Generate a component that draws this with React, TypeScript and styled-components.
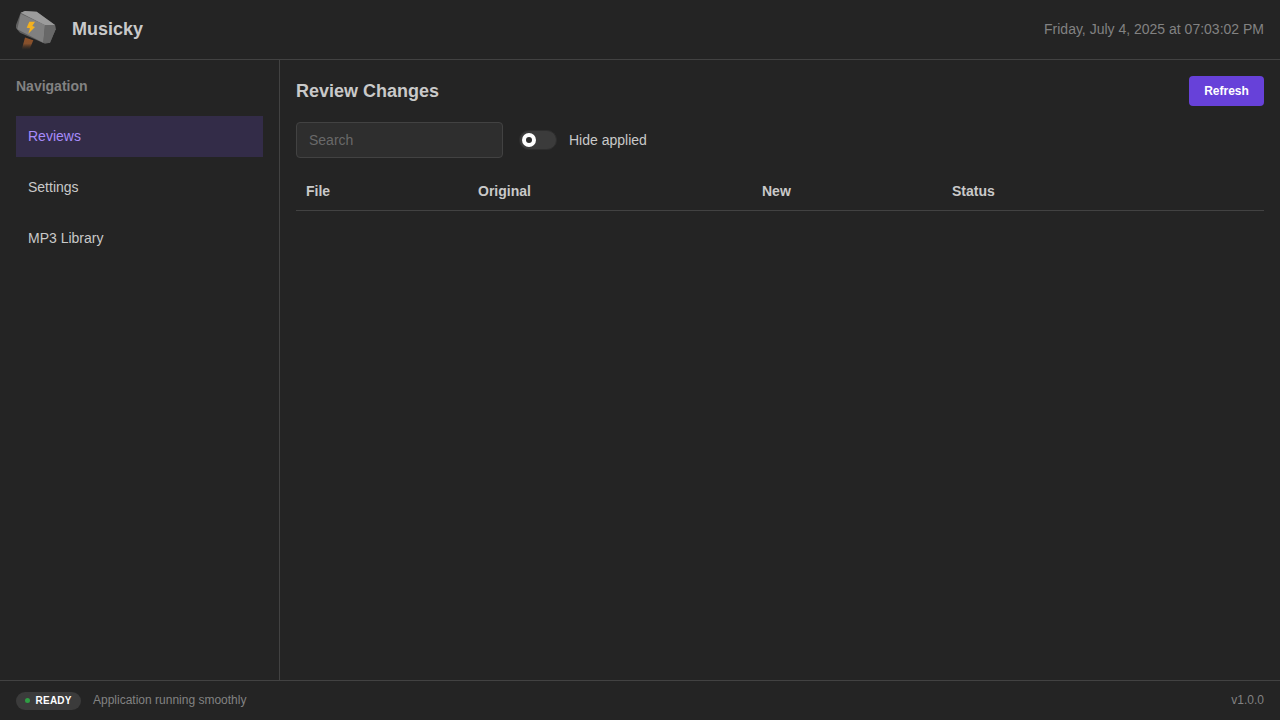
import { useState } from 'react';
import styled, { createGlobalStyle } from 'styled-components';

const GlobalStyle = createGlobalStyle`
  * {
    box-sizing: border-box;
  }

  html,
  body {
    margin: 0;
    height: 100%;
    background-color: #242424;
    color: #c9c9c9;
    font-family: 'Liberation Sans', Arial, sans-serif;
    line-height: 1.55;
  }
`;

const Shell = styled.div`
  display: grid;
  grid-template-rows: 60px 1fr 40px;
  height: 100vh;
  overflow: hidden;
`;

const Header = styled.header`
  display: flex;
  align-items: center;
  justify-content: space-between;
  padding: 0 16px;
  border-bottom: 1px solid #424242;
`;

const Brand = styled.div`
  display: flex;
  align-items: center;
  gap: 16px;
`;

const BrandName = styled.span`
  font-size: 18px;
  font-weight: 700;
`;

const Clock = styled.span`
  font-size: 14px;
  color: #828282;
`;

const Body = styled.div`
  display: grid;
  grid-template-columns: 280px 1fr;
  min-height: 0;
`;

const Sidebar = styled.nav`
  padding: 16px;
  border-right: 1px solid #424242;
`;

const SidebarTitle = styled.div`
  height: 20px;
  margin-bottom: 20px;
  font-size: 14px;
  line-height: 20px;
  font-weight: 700;
  color: #828282;
`;

const NavList = styled.div`
  display: flex;
  flex-direction: column;
  gap: 10px;
`;

const NavItem = styled.a<{ $active?: boolean }>`
  display: flex;
  align-items: center;
  height: 41px;
  padding: 0 12px;
  font-size: 14px;
  color: ${({ $active }) => ($active ? '#a78bfa' : '#c9c9c9')};
  background-color: ${({ $active }) => ($active ? '#332c48' : 'transparent')};
  cursor: pointer;
`;

const Main = styled.main`
  padding: 16px;
`;

const TitleRow = styled.div`
  display: flex;
  align-items: center;
  justify-content: space-between;
  height: 30px;
  margin-bottom: 16px;
`;

const PageTitle = styled.h2`
  margin: 0;
  font-size: 18px;
  line-height: normal;
  font-weight: 700;
`;

const RefreshButton = styled.button`
  width: 75px;
  height: 30px;
  padding: 0;
  border: 0;
  border-radius: 4px;
  background-color: #6741d9;
  color: #ffffff;
  font-family: inherit;
  font-size: 12px;
  font-weight: 700;
  cursor: pointer;
`;

const FilterRow = styled.div`
  display: flex;
  align-items: center;
  gap: 16px;
  height: 36px;
  margin-bottom: 14px;
`;

const SearchInput = styled.input`
  width: 207px;
  height: 36px;
  padding: 0 12px;
  border: 1px solid #424242;
  border-radius: 4px;
  outline: none;
  background-color: #2e2e2e;
  color: #c9c9c9;
  font-family: inherit;
  font-size: 14px;

  &::placeholder {
    color: #696969;
    opacity: 1;
  }
`;

const SwitchLabel = styled.label`
  display: flex;
  align-items: center;
  gap: 12px;
  font-size: 14px;
  line-height: normal;
  cursor: pointer;
`;

const SwitchTrack = styled.span`
  display: flex;
  align-items: center;
  width: 38px;
  height: 20px;
  padding: 0 2px;
  border: 1px solid #2e2e2e;
  border-radius: 10px;
  background-color: #3b3b3b;
`;

const SwitchThumb = styled.span`
  display: flex;
  align-items: center;
  justify-content: center;
  width: 14px;
  height: 14px;
  border-radius: 50%;
  background-color: #ffffff;

  &::after {
    content: '';
    width: 6px;
    height: 6px;
    border-radius: 50%;
    background-color: #2e2e2e;
  }
`;

const HiddenCheckbox = styled.input`
  position: absolute;
  width: 0;
  height: 0;
  opacity: 0;
`;

const TableHead = styled.div`
  display: grid;
  grid-template-columns: 172px 284px 190px 1fr;
  align-items: center;
  height: 39px;
  border-bottom: 1px solid #424242;
`;

const HeaderCell = styled.div`
  padding: 0 10px;
  font-size: 14px;
  line-height: normal;
  font-weight: 700;
`;

const Footer = styled.footer`
  display: flex;
  align-items: center;
  justify-content: space-between;
  padding: 0 16px;
  border-top: 1px solid #424242;
`;

const FooterStatus = styled.div`
  display: flex;
  align-items: center;
  gap: 12px;
`;

const ReadyBadge = styled.span`
  display: flex;
  align-items: center;
  gap: 5.5px;
  width: 65px;
  height: 18px;
  padding: 0 9px;
  border-radius: 9px;
  background-color: #3b3b3b;
  color: #ffffff;
  font-size: 10px;
  font-weight: 700;
  letter-spacing: 0.25px;
`;

const ReadyDot = styled.span`
  flex: none;
  width: 5px;
  height: 5px;
  border-radius: 50%;
  background-color: #2f9e44;
`;

const FooterText = styled.span`
  font-size: 12px;
  color: #828282;
`;

const HammerLogo = () => (
  <svg width="40" height="40" viewBox="0 0 40 40" aria-hidden="true">
    <defs>
      <linearGradient id="handle" x1="0" y1="0" x2="0" y2="1">
        <stop offset="0" stopColor="#8f5128" />
        <stop offset="0.5" stopColor="#85502c" />
        <stop offset="1" stopColor="#4a3325" stopOpacity="0" />
      </linearGradient>
    </defs>
    <path d="M9 27.500l8.300 2.800-4 9.700-7.600-.3z" fill="url(#handle)" />
    <path d="M0 15L4.700 2.700 9 1l11.700.7L39 15l.7 4.300-5.700 13.400-5 1L4 22.700 0 18z" fill="#5e5e5e" />
    <path d="M4.700 2.700L9 1l11.700.7L39 15l-10 .3z" fill="#9b9b9b" />
    <path d="M4.700 3.700L29 15l-1.700 17.700L1.300 19.300z" fill="#808080" />
    <path d="M29 15l10 0 .7 4.300-5.700 13.400-6.700 0z" fill="#686868" />
    <path d="M13.300 11.700H19L16.300 16l2.700 1-6.700 6.700 1.700-5.400-3.300-.6z" fill="#f2b01e" />
  </svg>
);

const columns = ['File', 'Original', 'New', 'Status'];

const App = () => {
  const [hideApplied, setHideApplied] = useState(false);

  return (
    <>
      <GlobalStyle />
      <Shell>
        <Header>
          <Brand>
            <HammerLogo />
            <BrandName>Musicky</BrandName>
          </Brand>
          <Clock>Friday, July 4, 2025 at 07:03:02 PM</Clock>
        </Header>
        <Body>
          <Sidebar>
            <SidebarTitle>Navigation</SidebarTitle>
            <NavList>
              <NavItem $active>Reviews</NavItem>
              <NavItem>Settings</NavItem>
              <NavItem>MP3 Library</NavItem>
            </NavList>
          </Sidebar>
          <Main>
            <TitleRow>
              <PageTitle>Review Changes</PageTitle>
              <RefreshButton>Refresh</RefreshButton>
            </TitleRow>
            <FilterRow>
              <SearchInput placeholder="Search" />
              <SwitchLabel>
                <HiddenCheckbox
                  type="checkbox"
                  checked={hideApplied}
                  onChange={(e) => setHideApplied(e.target.checked)}
                />
                <SwitchTrack>
                  <SwitchThumb />
                </SwitchTrack>
                Hide applied
              </SwitchLabel>
            </FilterRow>
            <TableHead>
              {columns.map((col) => (
                <HeaderCell key={col}>{col}</HeaderCell>
              ))}
            </TableHead>
          </Main>
        </Body>
        <Footer>
          <FooterStatus>
            <ReadyBadge>
              <ReadyDot />
              READY
            </ReadyBadge>
            <FooterText>Application running smoothly</FooterText>
          </FooterStatus>
          <FooterText>v1.0.0</FooterText>
        </Footer>
      </Shell>
    </>
  );
};

export default App;
